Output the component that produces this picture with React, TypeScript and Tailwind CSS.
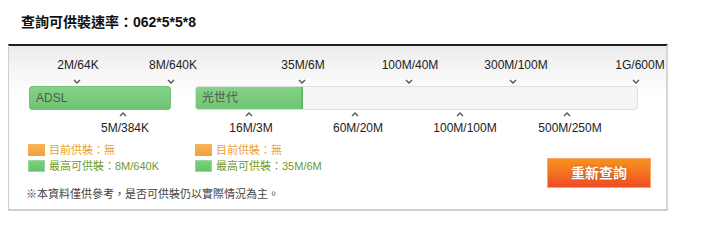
import React from "react";

const FONT = '"Liberation Sans", "Noto Sans CJK TC", sans-serif';

const topLabels = [
  { t: "2M/64K", x: 69, c: 68 },
  { t: "8M/640K", x: 164, c: 162 },
  { t: "35M/6M", x: 294, c: 293 },
  { t: "100M/40M", x: 401, c: 400 },
  { t: "300M/100M", x: 507, c: 504 },
  { t: "1G/600M", x: 631, c: 627 },
];

const bottomLabels = [
  { t: "5M/384K", x: 116, c: 114 },
  { t: "16M/3M", x: 242, c: 240 },
  { t: "60M/20M", x: 349, c: 346 },
  { t: "100M/100M", x: 456, c: 451 },
  { t: "500M/250M", x: 561, c: 558 },
];

function ChevronDown() {
  return (
    <svg width="8" height="5" viewBox="0 0 8 5" className="block">
      <polyline points="1,1 4,4 7,1" fill="none" stroke="#555" strokeWidth="1.4" />
    </svg>
  );
}

function ChevronUp() {
  return (
    <svg width="8" height="5" viewBox="0 0 8 5" className="block">
      <polyline points="1,4 4,1 7,4" fill="none" stroke="#555" strokeWidth="1.4" />
    </svg>
  );
}

function Legend({ max }: { max: string }) {
  return (
    <div className="flex flex-col">
      <div className="flex h-[16px] items-center gap-[4px]">
        <span className="block h-[12px] w-[17px] bg-gradient-to-b from-[#f8b457] to-[#f2a13c]" />
        <span className="text-[11px] text-[#e9a233]">目前供裝：無</span>
      </div>
      <div className="flex h-[16px] items-center gap-[4px]">
        <span className="block h-[12px] w-[17px] border border-[#9bd89b] bg-gradient-to-b from-[#7fd07f] to-[#66c26a]" />
        <span className="text-[11px] text-[#6f9a2c]">最高可供裝：{max}</span>
      </div>
    </div>
  );
}

export default function App() {
  return (
    <div className="h-[240px] w-[720px] bg-white" style={{ fontFamily: FONT }}>
      <div className="pl-[21px] pt-[12px]">
        <div className="h-[20px] text-[14px] font-bold leading-[20px] text-[#111]">查詢可供裝速率：062*5*5*8</div>
      </div>
      <div className="ml-[8px] mt-[12px] w-[660px] border-b-2 border-l border-r-2 border-t-2 border-b-[#d0d0d0] border-l-[#cfcfcf] border-r-[#d6d6d6] border-t-[#1e1e1e] bg-gradient-to-b from-[#ececec] to-white to-[30%]">
        <div className="flex flex-col pt-[12px] text-[12px] text-[#222]">
          <div className="relative h-[14px] leading-[14px]">
            {topLabels.map((l) => (
              <span key={l.t} className="absolute top-0 -translate-x-1/2 whitespace-nowrap" style={{ left: l.x }}>
                {l.t}
              </span>
            ))}
          </div>
          <div className="relative h-[14px]">
            {topLabels.map((l) => (
              <span key={l.t} className="absolute top-[7px] -translate-x-1/2" style={{ left: l.c }}>
                <ChevronDown />
              </span>
            ))}
          </div>
          <div className="flex h-[24px] pl-[20px]">
            <div className="flex h-[24px] w-[142px] items-center rounded-[3px] border border-[#72c476] bg-gradient-to-b from-[#84d288] to-[#70c474] pl-[6px] text-[12px] text-[#4f5a4f]">
              ADSL
            </div>
            <div className="ml-[24px] flex h-[24px] w-[443px] overflow-hidden rounded-[3px] border border-[#dedede] bg-[#f5f5f5]">
              <div className="flex h-full w-[107px] items-center border-r-2 border-r-[#5fbb63] bg-gradient-to-b from-[#84d288] to-[#70c474] pl-[6px] text-[12px] text-[#4f5a4f]">
                光世代
              </div>
            </div>
          </div>
          <div className="relative h-[10px]">
            {bottomLabels.map((l) => (
              <span key={l.t} className="absolute top-[2px] -translate-x-1/2" style={{ left: l.c }}>
                <ChevronUp />
              </span>
            ))}
          </div>
          <div className="relative h-[16px] leading-[16px]">
            {bottomLabels.map((l) => (
              <span key={l.t} className="absolute top-0 -translate-x-1/2 whitespace-nowrap" style={{ left: l.x }}>
                {l.t}
              </span>
            ))}
          </div>
        </div>
        <div className="flex items-start justify-between pt-[6px] pb-[8px] pl-[19px] pr-[15px]">
          <div className="flex flex-col">
            <div className="flex">
              <div className="w-[167px]">
                <Legend max="8M/640K" />
              </div>
              <Legend max="35M/6M" />
            </div>
            <div className="-ml-[2px] mt-[13px] h-[14px] text-[11px] leading-[14px] text-[#444]">
              ※本資料僅供參考，是否可供裝仍以實際情況為主。
            </div>
          </div>
          <button className="mt-[16px] flex h-[30px] w-[104px] items-center justify-center border border-[#f9a66b] bg-gradient-to-b from-[#f7921e] to-[#ee4a23] text-[14px] font-bold text-white [text-shadow:0_0_2px_rgba(120,40,0,0.5)]">
            重新查詢
          </button>
        </div>
      </div>
    </div>
  );
}
